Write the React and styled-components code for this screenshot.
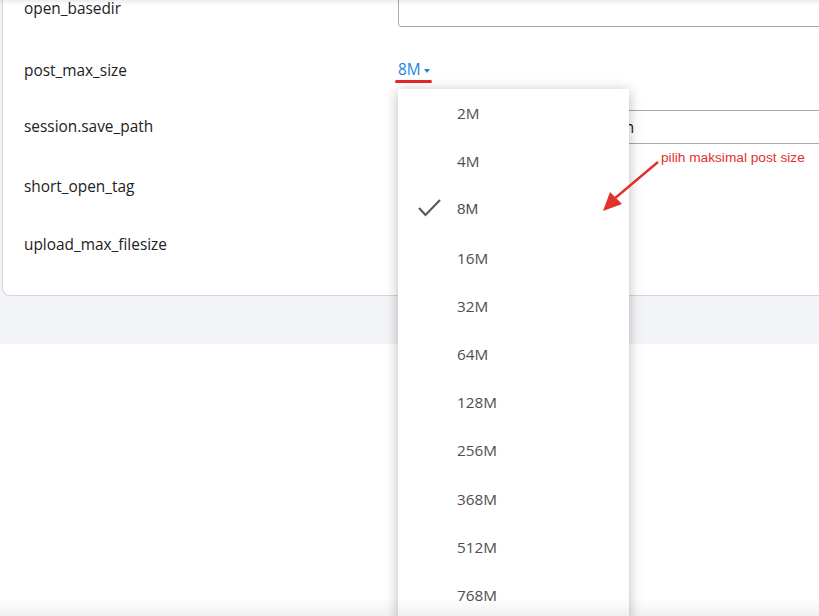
import React from 'react';
import styled, { createGlobalStyle } from 'styled-components';

const GlobalStyle = createGlobalStyle`
  html, body {
    margin: 0;
    padding: 0;
    background: #ffffff;
    overflow: hidden;
  }
  body {
    font-family: "Open Sans", "Noto Sans", sans-serif;
    color: #222;
  }
`;

const Page = styled.div`
  position: relative;
  height: 616px;
  background: #ffffff;

  /* soft edge shading of the captured window */
  &::before,
  &::after {
    content: "";
    position: fixed;
    left: 0;
    right: 0;
    pointer-events: none;
    z-index: 5;
  }
  &::before {
    top: 0;
    height: 5px;
    background: linear-gradient(rgba(0, 0, 0, 0.07), rgba(0, 0, 0, 0));
  }
  &::after {
    bottom: 0;
    height: 18px;
    background: linear-gradient(rgba(0, 0, 0, 0), rgba(0, 0, 0, 0.06));
  }
`;

const Content = styled.div`
  display: flow-root;
  background: #f3f4f7;
  padding: 0 0 48px 2px;
`;

const Card = styled.section`
  margin-top: -22px;
  width: calc(100% + 20px);
  background: #fff;
  border: 1px solid #d6d6d9;
  border-top: none;
  border-radius: 0 0 8px 8px;
  padding: 0 0 27px 21px;
  box-sizing: border-box;
`;

const Row = styled.div`
  display: grid;
  grid-template-columns: 374px 1fr;
  align-items: center;
  height: ${(p) => p.$h}px;
`;

const Label = styled.div`
  font-size: 15.4px;
  line-height: 20px;
  color: #222;
`;

const Value = styled.div`
  position: relative;
  height: 100%;
  display: flex;
  align-items: center;
`;

const TextField = styled.div`
  width: 100%;
  height: 34px;
  margin-top: ${(p) => p.$shift || 0}px;
  box-sizing: border-box;
  border: 1px solid #a9a9a9;
  border-radius: 3px;
  padding: 0 9px 0 4px;
  display: flex;
  align-items: center;
  font-size: 15.4px;
  color: #222;
  white-space: nowrap;
  overflow: hidden;
`;

const SizeToggle = styled.span`
  position: relative;
  display: inline-flex;
  align-items: center;
  gap: 3px;
  color: #1e84e0;
  font-size: 15.4px;
  line-height: 20px;
  margin-top: -2px;

  /* red marker drawn under the value */
  &::after {
    content: "";
    position: absolute;
    left: -3px;
    right: -2px;
    bottom: -3px;
    height: 3px;
    border-radius: 2px;
    background: #e02a26;
  }
`;

const Caret = styled.span`
  width: 0;
  height: 0;
  border-left: 3.5px solid transparent;
  border-right: 3.5px solid transparent;
  border-top: 4px solid #1e84e0;
  margin-top: 2px;
`;

const Menu = styled.ul`
  position: absolute;
  top: 49px;
  left: 0;
  width: 231px;
  margin: 0;
  padding: 0;
  list-style: none;
  background: #fff;
  box-shadow: 0 2px 12px rgba(0, 0, 0, 0.28);
  z-index: 3;
`;

const MenuItem = styled.li`
  position: relative;
  height: 48.2px;
  display: flex;
  align-items: center;
  padding-left: 59px;
  font-size: 15.3px;
  color: #4f4f4f;
  font-family: ${(p) =>
    p.$selected ? '"Liberation Sans", Arial, sans-serif' : '"Open Sans", sans-serif'};
`;

const Check = styled.svg`
  position: absolute;
  left: 19px;
  top: 12px;
`;

const Note = styled.div`
  position: absolute;
  left: 661px;
  top: 150px;
  font-family: "Liberation Sans", Arial, sans-serif;
  font-size: 13.7px;
  color: #e2302a;
  white-space: nowrap;
  z-index: 4;
`;

const Arrow = styled.svg`
  position: absolute;
  left: 598px;
  top: 156px;
  z-index: 4;
`;

const sizes = ['2M', '4M', '8M', '16M', '32M', '64M', '128M', '256M', '368M', '512M', '768M'];

export default function App() {
  return (
    <Page>
      <GlobalStyle />
      <Content>
        <Card>
          <Row $h={62}>
            <Label>open_basedir</Label>
            <Value>
              <TextField $shift={2} />
            </Value>
          </Row>
          <Row $h={62}>
            <Label>post_max_size</Label>
            <Value>
              <SizeToggle>
                8M
                <Caret />
              </SizeToggle>
              <Menu>
                {sizes.map((s) => (
                  <MenuItem key={s} $selected={s === '8M'}>
                    {s === '8M' && (
                      <Check width="26" height="24" viewBox="0 0 26 24">
                        <polyline
                          points="2,11 8.5,18 23,3"
                          fill="none"
                          stroke="#555"
                          strokeWidth="2"
                        />
                      </Check>
                    )}
                    {s}
                  </MenuItem>
                ))}
              </Menu>
            </Value>
          </Row>
          <Row $h={50}>
            <Label>session.save_path</Label>
            <Value>
              <TextField>/opt/alt/php/var/lib/php/session</TextField>
            </Value>
          </Row>
          <Row $h={70}>
            <Label>short_open_tag</Label>
            <Value />
          </Row>
          <Row $h={46}>
            <Label>upload_max_filesize</Label>
            <Value />
          </Row>
        </Card>
      </Content>
      <Note>pilih maksimal post size</Note>
      <Arrow width="66" height="60" viewBox="0 0 66 60">
        <line x1="60" y1="6" x2="16" y2="43" stroke="#e2302a" strokeWidth="2.4" />
        <polygon points="5,55 12,36 24,48" fill="#e2302a" />
      </Arrow>
    </Page>
  );
}
